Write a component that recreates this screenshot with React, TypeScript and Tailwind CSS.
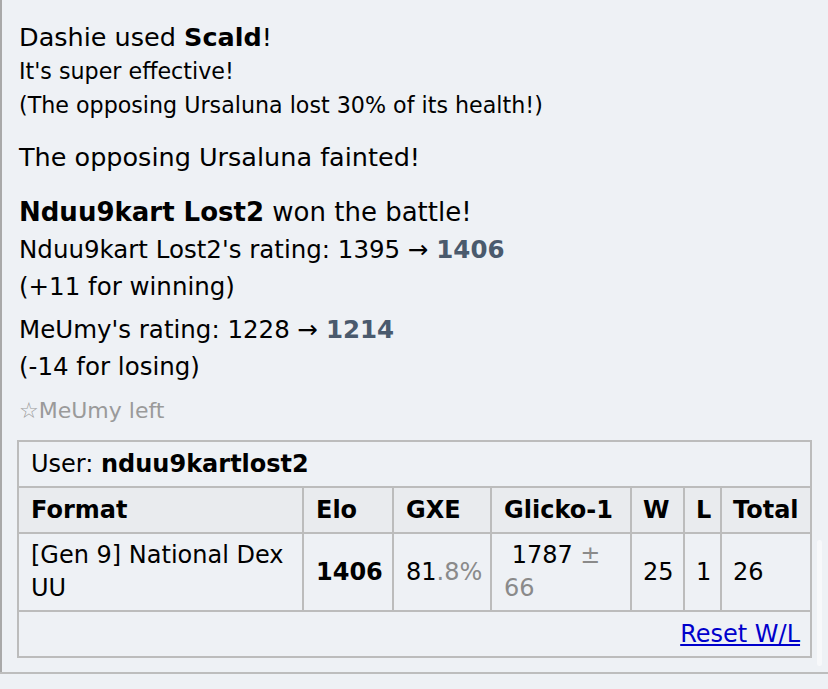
const App = () => {
  return (
    <div className="relative h-[689px] w-[828px] overflow-hidden bg-[#eef1f5] font-['DejaVu_Sans',sans-serif] text-black">
      <div className="h-[672px] border-l-2 border-[#a9a9a9] pl-[17px] pr-[16px] pt-[20px]">
        <div className="text-[25.5px] leading-[34px]">
          Dashie used <strong>Scald</strong>!
        </div>
        <div className="text-[22.2px] leading-[34px]">It's super effective!</div>
        <div className="text-[22.2px] leading-[34px]">
          (The opposing Ursaluna lost 30% of its health!)
        </div>
        <div className="mt-[18px] text-[25.5px] leading-[34px]">
          The opposing Ursaluna fainted!
        </div>
        <div className="mt-[20px] text-[26px] leading-[37px]">
          <strong>Nduu9kart Lost2</strong> won the battle!
        </div>
        <div className="text-[24.5px] leading-[37px]">
          Nduu9kart Lost2's rating: 1395 &rarr;{" "}
          <strong className="text-[#4a5a6d]">1406</strong>
        </div>
        <div className="text-[24.5px] leading-[37px]">(+11 for winning)</div>
        <div className="mt-[6px] text-[24.5px] leading-[37px]">
          MeUmy's rating: 1228 &rarr;{" "}
          <strong className="text-[#4a5a6d]">1214</strong>
        </div>
        <div className="text-[24.5px] leading-[37px]">(-14 for losing)</div>
        <div className="mt-[11px] text-[22px] leading-[30px] text-[#9a9a9a]">
          &#9734;MeUmy left
        </div>
        <table className="-ml-[2px] mt-[14px] w-[793px] table-fixed border-collapse border-2 border-[#bcbcbc] text-[24px]">
          <colgroup>
            <col className="w-[285px]" />
            <col className="w-[90px]" />
            <col className="w-[98px]" />
            <col className="w-[140px]" />
            <col className="w-[53px]" />
            <col className="w-[37px]" />
            <col className="w-[90px]" />
          </colgroup>
          <tbody>
            <tr className="h-[46px]">
              <td colSpan={7} className="border-2 border-[#bcbcbc] px-[12px] leading-[30px]">
                User: <strong>nduu9kartlost2</strong>
              </td>
            </tr>
            <tr className="h-[46px] bg-[#e9ebee] font-bold">
              <th className="border-2 border-[#bcbcbc] px-[12px] text-left">Format</th>
              <th className="border-2 border-[#bcbcbc] px-[12px] text-left">Elo</th>
              <th className="border-2 border-[#bcbcbc] px-[12px] text-left">GXE</th>
              <th className="border-2 border-[#bcbcbc] px-[12px] text-left">Glicko-1</th>
              <th className="border-2 border-[#bcbcbc] px-[11px] text-left">W</th>
              <th className="border-2 border-[#bcbcbc] px-[11px] text-left">L</th>
              <th className="border-2 border-[#bcbcbc] px-[11px] text-left">Total</th>
            </tr>
            <tr className="h-[78px] leading-[33px]">
              <td className="border-2 border-[#bcbcbc] px-[12px]">[Gen 9] National Dex UU</td>
              <td className="border-2 border-[#bcbcbc] px-[12px]">
                <strong>1406</strong>
              </td>
              <td className="border-2 border-[#bcbcbc] px-[12px]">
                81<span className="text-[#8a8a8a]">.8%</span>
              </td>
              <td className="border-2 border-[#bcbcbc] px-[12px]">
                &nbsp;1787 <span className="text-[#8a8a8a]">±</span>{" "}
                <span className="text-[#8a8a8a]">66</span>
              </td>
              <td className="border-2 border-[#bcbcbc] px-[11px]">25</td>
              <td className="border-2 border-[#bcbcbc] px-[11px]">1</td>
              <td className="border-2 border-[#bcbcbc] px-[11px]">26</td>
            </tr>
            <tr className="h-[46px]">
              <td colSpan={7} className="border-2 border-[#bcbcbc] px-[10px] text-right leading-[30px]">
                <a href="#" className="text-[#0000cc] underline">
                  Reset W/L
                </a>
              </td>
            </tr>
          </tbody>
        </table>
      </div>
      <div className="border-t-2 border-[#bdbdbd]" />
      <div className="absolute right-[6px] top-[540px] h-[126px] w-[5px] rounded-full bg-[#f7f8fa]" />
    </div>
  );
};

export default App;
